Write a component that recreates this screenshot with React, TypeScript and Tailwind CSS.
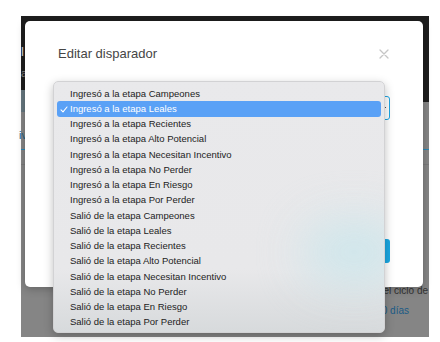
const options = [
  "Ingresó a la etapa Campeones",
  "Ingresó a la etapa Leales",
  "Ingresó a la etapa Recientes",
  "Ingresó a la etapa Alto Potencial",
  "Ingresó a la etapa Necesitan Incentivo",
  "Ingresó a la etapa No Perder",
  "Ingresó a la etapa En Riesgo",
  "Ingresó a la etapa Por Perder",
  "Salió de la etapa Campeones",
  "Salió de la etapa Leales",
  "Salió de la etapa Recientes",
  "Salió de la etapa Alto Potencial",
  "Salió de la etapa Necesitan Incentivo",
  "Salió de la etapa No Perder",
  "Salió de la etapa En Riesgo",
  "Salió de la etapa Por Perder",
];

const selected = 1;

function Backdrop() {
  return (
    <div className="pt-[16px] pl-[21px]">
      <div className="flex h-[321px] w-[408px] flex-col bg-[#858585] font-['Liberation_Sans',sans-serif]">
        <div className="flex h-[74px] flex-col bg-[#1e1e1e] pt-[28px] text-[13px] leading-[16px]">
          <span className="text-[#d8d8d8]">l</span>
          <span className="mt-[5px] text-[11px] text-[#8a8a8a]">a</span>
        </div>
        <div className="flex h-[22px]">
          <div className="w-[40px] bg-[#66777f]" />
          <div className="flex-1 bg-[#858585]" />
          <div className="flex w-[20px] flex-col">
            <div className="h-[12px] bg-[#1e1e1e]" />
            <div className="flex-1 bg-[#858585]" />
          </div>
        </div>
        <div className="flex h-[37px] items-end pb-[6px] text-[11px] text-[#1f6486]">
          <span className="-ml-[2px]">iv</span>
        </div>
        <div className="h-[1px] bg-[#2a86b4]" />
        <div className="h-[14px]" />
        <div className="h-[1px] bg-[#7a7a7a]" />
        <div className="flex flex-1 flex-col items-end pr-[1px] pt-[120px] text-[10px] leading-[12px]">
          <span className="text-[#333]">el ciclo de</span>
          <span className="mt-[8px] pr-[19px] text-[#1b5b85]">60 días</span>
        </div>
      </div>
    </div>
  );
}

function Modal() {
  return (
    <div className="absolute left-[25px] top-[21px] h-[266px] w-[398px] rounded-[5px] bg-white px-[33px] pt-[25px] shadow-[0_2px_8px_rgba(0,0,0,0.25)] font-['Liberation_Sans',sans-serif]">
      <div className="flex items-center justify-between">
        <h2 className="text-[13px] leading-[16px] text-[#454545]">Editar disparador</h2>
        <svg width="10" height="10" viewBox="0 0 10 10" className="mr-[1px]">
          <path d="M1 1 L9 9 M9 1 L1 9" stroke="#c6c6c6" strokeWidth="1.3" strokeLinecap="round" />
        </svg>
      </div>
      <div className="mt-[34px] flex h-[24px] w-full items-center justify-end rounded-[3px] border border-[#1ea5e2] pr-[2px]">
        <svg width="5" height="5" viewBox="0 0 5 5">
          <path d="M1 4 L4 1" stroke="#555" strokeWidth="1" />
        </svg>
      </div>
      <div className="mt-[119px] flex justify-end">
        <div className="h-[24px] w-[90px] rounded-[3px] bg-[#1aa8e2]" />
      </div>
    </div>
  );
}

function Dropdown() {
  return (
    <div className="absolute left-[53px] top-[81px] h-[252px] w-[332px] overflow-hidden rounded-[5px] border border-[#d2d2d4] bg-linear-to-b from-[#e9e9eb] via-[#e8e8ea] via-75% to-[#d7dadc] py-[4px] shadow-[0_3px_10px_rgba(0,0,0,0.25)] font-['Liberation_Sans',sans-serif]">
      <div className="absolute left-[250px] top-[140px] h-[60px] w-[100px] rounded-full bg-[#c6e6ec] opacity-80 blur-xl" />
      <div className="relative flex flex-col">
        {options.map((o, i) => (
          <div
            key={o}
            className={
              i === selected
                ? "relative mx-[3px] flex h-[15.25px] items-center rounded-[3px] bg-[#5aa1f6] pl-[13px] text-[9.5px] text-white"
                : "relative mx-[3px] flex h-[15.25px] items-center pl-[13px] text-[9.5px] text-[#222]"
            }
          >
            {i === selected && (
              <svg width="8" height="7" viewBox="0 0 8 7" className="absolute left-[3px] top-[4.5px]">
                <path d="M1 3.8 L3 5.8 L7 1" stroke="white" strokeWidth="1.1" fill="none" strokeLinecap="round" strokeLinejoin="round" />
              </svg>
            )}
            {o}
          </div>
        ))}
      </div>
    </div>
  );
}

export default function App() {
  return (
    <div className="relative h-[342px] w-[440px] overflow-hidden bg-white">
      <Backdrop />
      <Modal />
      <Dropdown />
    </div>
  );
}
